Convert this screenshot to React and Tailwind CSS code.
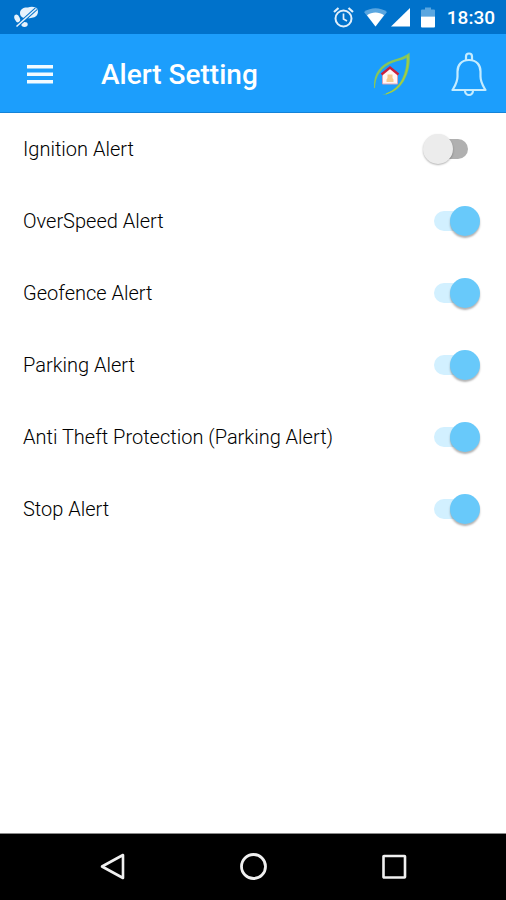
import React, { useState } from 'react';

const initialAlerts = [
  { id: 'ignition', label: 'Ignition Alert', enabled: false },
  { id: 'overspeed', label: 'OverSpeed Alert', enabled: true },
  { id: 'geofence', label: 'Geofence Alert', enabled: true },
  { id: 'parking', label: 'Parking Alert', enabled: true },
  { id: 'antitheft', label: 'Anti Theft Protection (Parking Alert)', enabled: true },
  { id: 'stop', label: 'Stop Alert', enabled: true }
];

const StatusBar = () => (
  <div className="flex h-[34px] items-center bg-[#0072cb] pl-3.5 pr-[11px] pt-0.5 text-white">
    <svg width="25" height="24" viewBox="0 0 25 24" fill="none">
      <path d="M6 7 C6 3 10 1 14 1.500 C17 0 22 0.500 23.500 3 C25 7 23 11 19 11.500 C15 12.500 12 12.500 10 12 C7 11 6 9.500 6 7 Z" fill="#e6f2fc" />
      <ellipse cx="3.200" cy="12.500" rx="2.600" ry="4" fill="#e6f2fc" transform="rotate(-25 3.200 12.500)" />
      <ellipse cx="10.500" cy="18.500" rx="3.200" ry="2.400" fill="#e6f2fc" />
      <path d="M2 21 L22.500 2.500" stroke="#0072cb" strokeWidth="3.600" />
      <path d="M2.500 20.500 L22.500 2.500" stroke="#e6f2fc" strokeWidth="1.600" />
    </svg>

    <div className="ml-auto flex items-center">
      <svg className="mr-2.5" width="21" height="22" viewBox="0 0 21 22" fill="none" stroke="#e0effb">
        <circle cx="10.500" cy="11.500" r="8" strokeWidth="2" />
        <path d="M1 5 L5.500 1 M20 5 L15.500 1" strokeWidth="2.200" />
        <path d="M10.500 6.500 V12 L14 14" strokeWidth="1.700" />
      </svg>
      <svg className="mr-1" width="23" height="20" viewBox="0 0 23 20">
        <path d="M0 4 C7 -1 16 -1 23 4 L11.500 18.500 Z" fill="#5aa6e0" />
        <path d="M3 7.300 C8 3.500 15 3.500 20 7.300 L11.500 18.500 Z" fill="#fff" />
      </svg>
      <svg className="mr-2.5" width="20" height="20" viewBox="0 0 20 20">
        <path d="M0 18.500 H19 V0 Z" fill="#fff" />
      </svg>
      <svg className="mr-3" width="14" height="22" viewBox="0 0 14 22">
        <path d="M4 0.500 H10 V2.500 H13 Q14 2.500 14 3.500 V9.500 H0 V3.500 Q0 2.500 1 2.500 H4 Z" fill="#5aa6e0" />
        <path d="M0 9.500 H14 V19.500 Q14 20.500 13 20.500 H1 Q0 20.500 0 19.500 Z" fill="#fff" />
      </svg>
      <span className="text-[19px] font-medium leading-6">18:30</span>
    </div>
  </div>
);

const LeafHomeIcon = () => (
  <svg width="38" height="46" viewBox="0 0 38 46" fill="none">
    <path d="M1 36 C0 21 8 12 20 8 C27 6 32 4.500 36.500 0.500 C37.500 11 36 20 31 29 C26 37 19 42 9 43 C18 40.500 25 35 29 27 C32.500 20 33.500 13 33.500 6 C29 8.500 25 8.500 19 11 C9 15 2.500 23 2 36 Z" fill="#86c65c" />
    <path d="M34.800 3.500 C35.500 12 34.500 20 30 28 C26 35 20 40 13 42" stroke="#a6cf42" strokeWidth="1.200" />
    <path d="M9.500 22 L17 15.500 L24.500 22 V32 H9.500 Z" fill="#fff6f4" stroke="#d9a3ba" strokeWidth="1" />
    <path d="M8.500 22.500 L17 15.500 L25.500 22.500" stroke="#cb1f3c" strokeWidth="2.400" />
    <path d="M13.500 30 V27.500 L14.500 26 V22.500 H19.500 V26 L20.500 27.500 V30 Z" fill="#f4c98f" />
  </svg>
);

const BellIcon = () => (
  <svg width="36" height="46" viewBox="0 0 36 46" fill="none" stroke="#c4ecff" strokeWidth="2.200">
    <path d="M15 8 V4.500 a3 3 0 0 1 6 0 V8" />
    <path d="M18 8 C10 8 6.500 13.500 6.500 19.500 V24.500 C6.500 30.500 3.500 34.500 1.500 38 H34.500 C32.500 34.500 29.500 30.500 29.500 24.500 V19.500 C29.500 13.500 26 8 18 8 Z" strokeLinejoin="round" />
    <path d="M14 38.500 a4 4.500 0 0 0 8 0" />
  </svg>
);

const AlertRow = ({ alert, onToggle }) => (
  <label
    htmlFor={alert.id}
    className="flex h-18 cursor-pointer items-center justify-between pl-[23px] pr-8"
  >
    <span className="text-[20px] font-light leading-6 text-black">{alert.label}</span>
    <input
      id={alert.id}
      type="checkbox"
      role="switch"
      checked={alert.enabled}
      onChange={() => onToggle(alert.id)}
      className="relative mr-1.5 h-5 w-10 shrink-0 cursor-pointer appearance-none rounded-full bg-[#b0b0b0] before:absolute before:-left-[5px] before:-top-[5px] before:size-[30px] before:rounded-full before:bg-[#ececec] before:shadow-[0_1px_2px_rgba(0,0,0,0.3)] before:content-[''] checked:mr-0 checked:bg-[#d2f0ff] checked:before:left-4 checked:before:bg-[#68c9fa] checked:before:shadow-[0_2px_2px_rgba(0,0,0,0.3)]"
    />
  </label>
);

const NavigationBar = () => (
  <nav className="grid h-[67px] grid-cols-3 items-center border-t border-[#8a8a8a] bg-black px-[42px]">
    <button type="button" aria-label="Back" className="flex justify-center">
      <svg width="28" height="28" viewBox="0 0 28 28" fill="none" stroke="#f0f0f0" strokeWidth="2.600">
        <path d="M25 2 V25 L4 13.500 Z" strokeLinejoin="round" />
      </svg>
    </button>
    <button type="button" aria-label="Home" className="flex justify-center">
      <svg width="28" height="28" viewBox="0 0 28 28" fill="none" stroke="#f0f0f0" strokeWidth="2.800">
        <circle cx="14.500" cy="13.500" r="12" />
      </svg>
    </button>
    <button type="button" aria-label="Recent apps" className="flex justify-center">
      <svg width="28" height="28" viewBox="0 0 28 28" fill="none" stroke="#f0f0f0" strokeWidth="2.600">
        <rect x="3.500" y="3" width="21.500" height="21.500" rx="0.500" />
      </svg>
    </button>
  </nav>
);

const App = () => {
  const [alerts, setAlerts] = useState(initialAlerts);

  const handleToggle = (id) => {
    setAlerts(alerts.map(alert => (
      alert.id === id ? { ...alert, enabled: !alert.enabled } : alert
    )));
  };

  return (
    <div className="flex min-h-screen flex-col bg-white font-[Roboto,sans-serif]">
      <StatusBar />

      <header className="flex h-[79px] items-center border-b border-[#1583d8] bg-[#1c9efc] pl-[27px] pr-[19px] pt-[3px] text-white">
        <button type="button" aria-label="Open menu">
          <svg width="26" height="20" viewBox="0 0 26 20" fill="#f2fbff">
            <path d="M0 0 H26 V3.500 H0 Z M0 7.500 H26 V11 H0 Z M0 15 H26 V18.500 H0 Z" />
          </svg>
        </button>
        <h1 className="ml-12 text-[28px] font-medium leading-8">Alert Setting</h1>
        <button type="button" aria-label="Home" className="ml-auto">
          <LeafHomeIcon />
        </button>
        <button type="button" aria-label="Notifications" className="ml-10">
          <BellIcon />
        </button>
      </header>

      {/* Alert switches */}
      <main className="flex-1">
        {alerts.map(alert => (
          <AlertRow key={alert.id} alert={alert} onToggle={handleToggle} />
        ))}
      </main>

      <NavigationBar />
    </div>
  );
};

export default App;
